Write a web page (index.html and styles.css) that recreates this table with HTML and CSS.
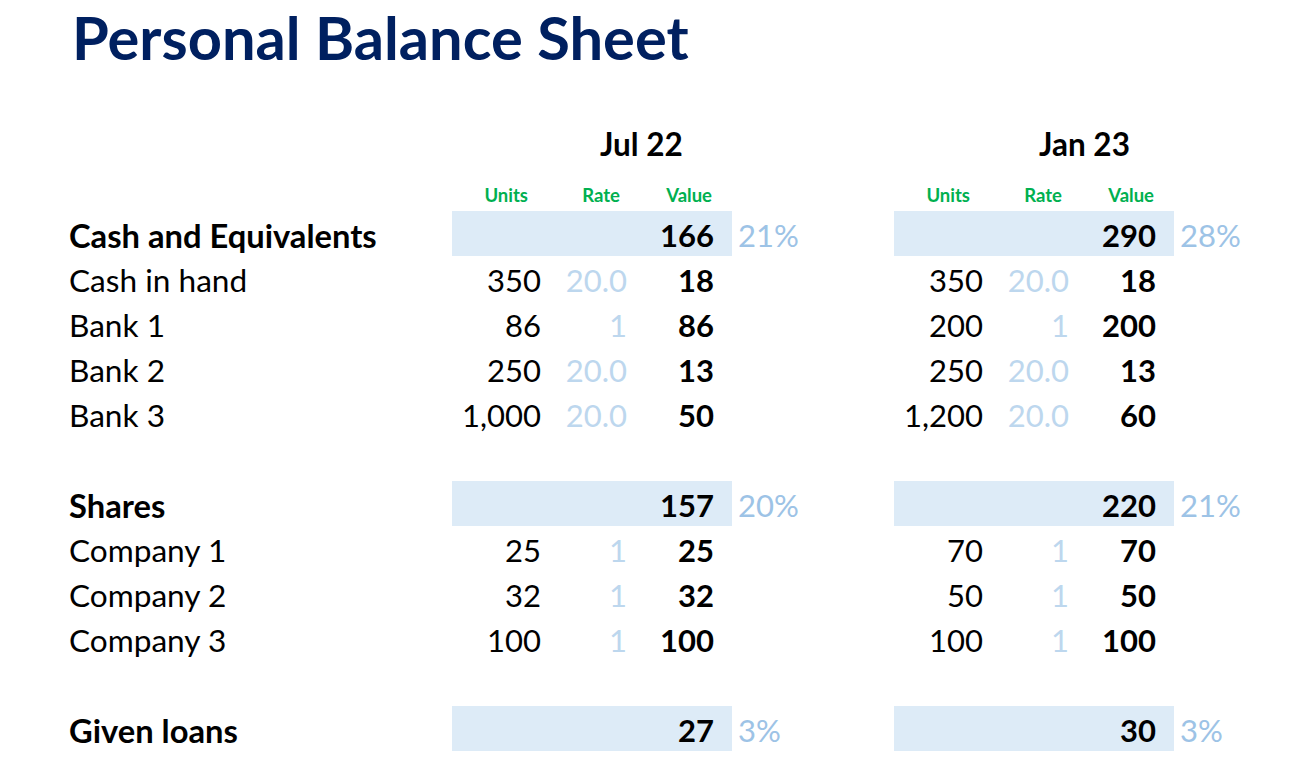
FILE: index.html
```html
<!DOCTYPE html>
<html>
<head>
<meta charset="utf-8">
<link rel="stylesheet" href="styles.css">
</head>
<body>
<div class="sheet">
  <h1 class="title">Personal Balance Sheet</h1>
  <div class="grid">
    <div class="cell"></div>
    <div class="cell period"><span>Jul 22</span></div>
    <div class="cell"></div>
    <div class="cell period period-2"><span>Jan 23</span></div>
    <div class="cell"></div>

    <div class="cell sub"></div>
    <div class="cell sub units-h">Units</div><div class="cell sub rate-h">Rate</div><div class="cell sub value-h">Value</div><div class="cell sub"></div>
    <div class="cell sub units-h">Units</div><div class="cell sub rate-h">Rate</div><div class="cell sub value-h">Value</div><div class="cell sub"></div>

    <div class="cell label bold">Cash and Equivalents</div>
    <div class="cell band"></div><div class="cell band"></div><div class="cell band value">166</div><div class="cell pct">21%</div>
    <div class="cell band"></div><div class="cell band"></div><div class="cell band value">290</div><div class="cell pct">28%</div>

    <div class="cell label">Cash in hand</div>
    <div class="cell units">350</div><div class="cell rate">20.0</div><div class="cell value">18</div><div class="cell"></div>
    <div class="cell units">350</div><div class="cell rate">20.0</div><div class="cell value">18</div><div class="cell"></div>

    <div class="cell label">Bank 1</div>
    <div class="cell units">86</div><div class="cell rate">1</div><div class="cell value">86</div><div class="cell"></div>
    <div class="cell units">200</div><div class="cell rate">1</div><div class="cell value">200</div><div class="cell"></div>

    <div class="cell label">Bank 2</div>
    <div class="cell units">250</div><div class="cell rate">20.0</div><div class="cell value">13</div><div class="cell"></div>
    <div class="cell units">250</div><div class="cell rate">20.0</div><div class="cell value">13</div><div class="cell"></div>

    <div class="cell label">Bank 3</div>
    <div class="cell units">1,000</div><div class="cell rate">20.0</div><div class="cell value">50</div><div class="cell"></div>
    <div class="cell units">1,200</div><div class="cell rate">20.0</div><div class="cell value">60</div><div class="cell"></div>

    <div class="cell spacer"></div>

    <div class="cell label bold">Shares</div>
    <div class="cell band"></div><div class="cell band"></div><div class="cell band value">157</div><div class="cell pct">20%</div>
    <div class="cell band"></div><div class="cell band"></div><div class="cell band value">220</div><div class="cell pct">21%</div>

    <div class="cell label">Company 1</div>
    <div class="cell units">25</div><div class="cell rate">1</div><div class="cell value">25</div><div class="cell"></div>
    <div class="cell units">70</div><div class="cell rate">1</div><div class="cell value">70</div><div class="cell"></div>

    <div class="cell label">Company 2</div>
    <div class="cell units">32</div><div class="cell rate">1</div><div class="cell value">32</div><div class="cell"></div>
    <div class="cell units">50</div><div class="cell rate">1</div><div class="cell value">50</div><div class="cell"></div>

    <div class="cell label">Company 3</div>
    <div class="cell units">100</div><div class="cell rate">1</div><div class="cell value">100</div><div class="cell"></div>
    <div class="cell units">100</div><div class="cell rate">1</div><div class="cell value">100</div><div class="cell"></div>

    <div class="cell spacer"></div>

    <div class="cell label bold">Given loans</div>
    <div class="cell band"></div><div class="cell band"></div><div class="cell band value">27</div><div class="cell pct">3%</div>
    <div class="cell band"></div><div class="cell band"></div><div class="cell band value">30</div><div class="cell pct">3%</div>
  </div>
</div>
</body>
</html>
```

FILE: styles.css
```css
html, body {
  margin: 0;
  padding: 0;
  background: #ffffff;
  overflow: hidden;
}

.sheet {
  font-family: Lato, "Open Sans", sans-serif;
  color: #000000;
  padding-left: 69px;
}

.title {
  margin: 0;
  padding: 5px 0 0 3px;
  height: 83px;
  box-sizing: border-box;
  font-size: 59.6px;
  font-weight: 700;
  line-height: 64px;
  color: #002060;
  letter-spacing: 0;
}

.grid {
  margin-top: 38px;
  display: grid;
  grid-template-columns: 383px 91px 86px 103px 162px 91px 86px 103px 100px;
  grid-auto-rows: 45px;
  font-size: 31px;
}

.cell {
  display: flex;
  align-items: center;
  white-space: nowrap;
  padding-top: 3px;
  box-sizing: border-box;
}

.period {
  grid-column: span 3;
  justify-content: flex-start;
  padding-left: 148px;
  font-weight: 700;
  font-size: 31.5px;
  padding-top: 0;
}

.period-2 { padding-left: 145px; }

.sub {
  font-size: 18.5px;
  font-weight: 700;
  color: #00b050;
  padding-top: 12px;
}

.units-h { justify-content: flex-end; padding-right: 15px; }
.rate-h { justify-content: flex-end; padding-right: 9px; }
.value-h { justify-content: flex-end; padding-right: 20px; }

.label { padding-left: 0; font-size: 31.6px; }
.label.bold { font-size: 32.7px; }
.bold { font-weight: 700; }

.band { background: #ddebf7; }

.units { justify-content: flex-end; padding-right: 2px; }
.rate { justify-content: flex-end; padding-right: 2px; color: #bdd7ee; }
.value { justify-content: flex-end; padding-right: 18px; font-weight: 700; }

.pct {
  color: #9dc3e6;
  padding-left: 6px;
}

.spacer { grid-column: 1 / -1; }
```
